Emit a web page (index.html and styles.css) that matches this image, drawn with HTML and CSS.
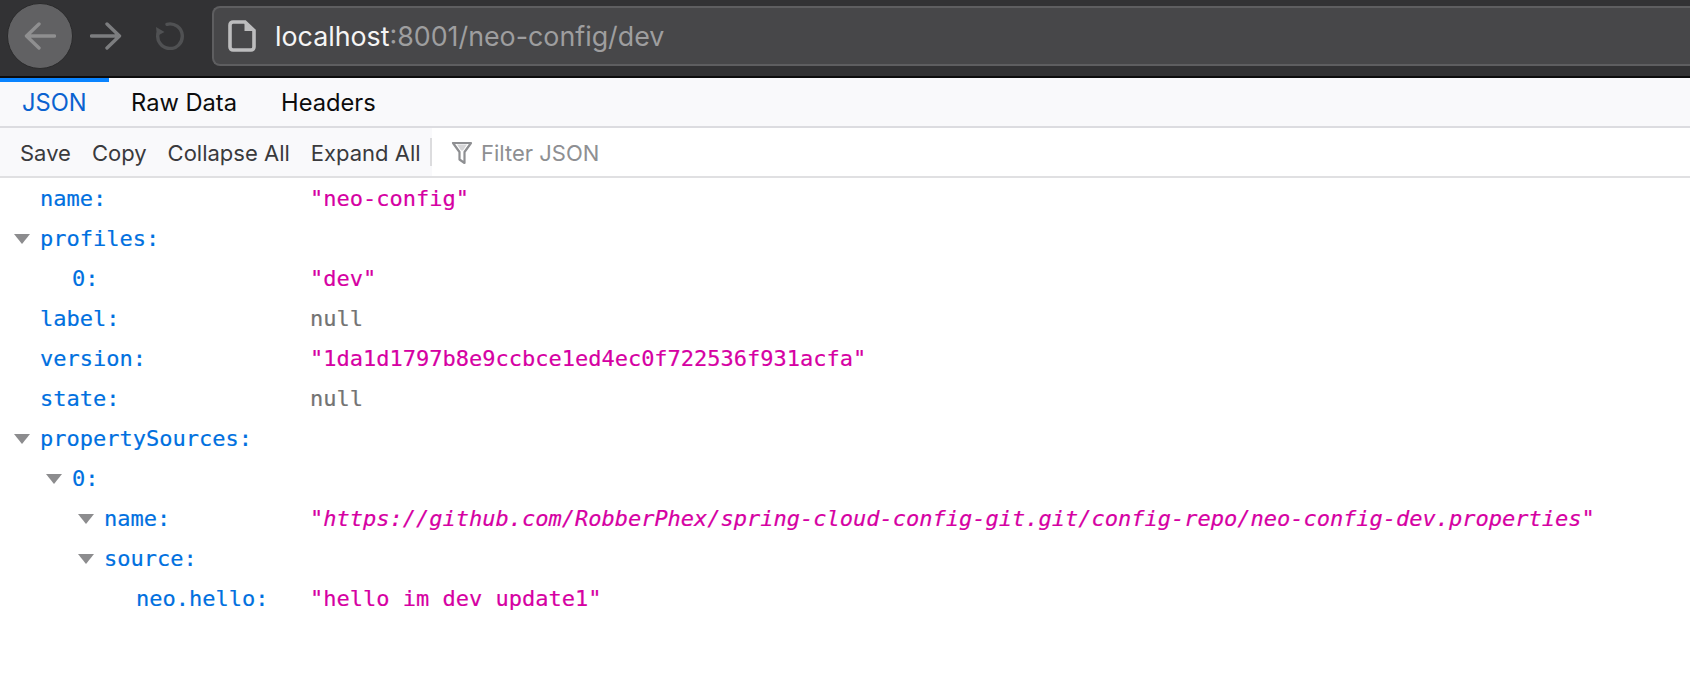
FILE: index.html
```html
<!DOCTYPE html>
<html lang="en">
<head>
<meta charset="utf-8">
<title>localhost:8001/neo-config/dev</title>
<link rel="stylesheet" href="styles.css">
</head>
<body>
<header class="chrome">
  <div class="nav-btn back">
    <svg viewBox="0 0 32 28" width="32" height="28"><path d="M30.500 14H3.500M15 2L2.500 14 15 26" fill="none" stroke="#8f8f90" stroke-width="3.400" stroke-linecap="round" stroke-linejoin="round"/></svg>
  </div>
  <div class="nav-btn forward">
    <svg viewBox="0 0 32 28" width="32" height="28"><path d="M1.500 14H28.500M17 2L29.500 14 17 26" fill="none" stroke="#7c7d7f" stroke-width="3.400" stroke-linecap="round" stroke-linejoin="round"/></svg>
  </div>
  <div class="nav-btn reload">
    <svg viewBox="0 0 30 28" width="30" height="28"><path d="M12 2.300A12.300 12.300 0 1 1 3 11.500" fill="none" stroke="#505153" stroke-width="3.400" stroke-linecap="round"/><path d="M1 5L9.500 10 2 14Z" fill="#505153"/></svg>
  </div>
  <div class="urlbar">
    <svg class="page-icon" viewBox="0 0 28 32" width="28" height="32"><path d="M5 2H17L26 10.500V27A3 3 0 0 1 23 30H5A3 3 0 0 1 2 27V5A3 3 0 0 1 5 2Z" fill="none" stroke="#bdbdbe" stroke-width="3.600"/><path d="M16.500 2.500V11H25.500Z" fill="#bdbdbe"/></svg>
    <span class="host">localhost</span><span class="rest">:8001/neo-config/dev</span>
  </div>
</header>
<nav class="tabs">
  <span class="tab active">JSON</span>
  <span class="tab">Raw Data</span>
  <span class="tab">Headers</span>
</nav>
<div class="toolbar">
  <div class="actions">
    <span class="action">Save</span>
    <span class="action">Copy</span>
    <span class="action">Collapse All</span>
    <span class="action">Expand All</span>
  </div>
  <div class="filter">
    <svg viewBox="0 0 22 24" width="22" height="24"><path d="M2 2H20L13.500 11V22L8.500 18.500V11Z" fill="none" stroke="#8e8f92" stroke-width="2.200" stroke-linejoin="round"/><path d="M6 3.500H16L12 9.500H10Z" fill="#d5d5d7"/></svg>
    <span>Filter JSON</span>
  </div>
</div>
<main class="tree">
  <div class="row"><div class="key l0"><span class="label">name:</span></div><div class="val str">"neo-config"</div></div>
  <div class="row"><div class="key l0"><i class="twisty"></i><span class="label">profiles:</span></div></div>
  <div class="row"><div class="key l1"><span class="label">0:</span></div><div class="val str">"dev"</div></div>
  <div class="row"><div class="key l0"><span class="label">label:</span></div><div class="val nul">null</div></div>
  <div class="row"><div class="key l0"><span class="label">version:</span></div><div class="val str">"1da1d1797b8e9ccbce1ed4ec0f722536f931acfa"</div></div>
  <div class="row"><div class="key l0"><span class="label">state:</span></div><div class="val nul">null</div></div>
  <div class="row"><div class="key l0"><i class="twisty"></i><span class="label">propertySources:</span></div></div>
  <div class="row"><div class="key l1"><i class="twisty"></i><span class="label">0:</span></div></div>
  <div class="row"><div class="key l2"><i class="twisty"></i><span class="label">name:</span></div><div class="val str">"<em>https://github.com/RobberPhex/spring-cloud-config-git.git/config-repo/neo-config-dev.properties</em>"</div></div>
  <div class="row"><div class="key l2"><i class="twisty"></i><span class="label">source:</span></div></div>
  <div class="row"><div class="key l3"><span class="label">neo.hello:</span></div><div class="val str">"hello im dev update1"</div></div>
</main>
</body>
</html>
```
FILE: styles.css
```css
* { box-sizing: border-box; }
html, body { margin: 0; padding: 0; height: 100%; overflow: hidden; background: #fff; }
body { font-family: Inter, "Liberation Sans", sans-serif; }

.chrome {
  height: 78px;
  background: #323234;
  border-bottom: 2px solid #0c0c0d;
  display: flex;
  align-items: center;
  padding: 0 0 4px 7px;
}
.nav-btn { display: flex; align-items: center; justify-content: center; flex: none; }
.back { width: 66px; height: 66px; border-radius: 50%; background: #616163; border: 1px solid #2a2a2b; }
.forward { width: 32px; height: 28px; margin-left: 17px; }
.reload { width: 30px; height: 28px; margin-left: 33px; }
.urlbar {
  flex: 1;
  height: 60px;
  margin-left: 27px;
  background: #474749;
  border: 2px solid #5e5e60;
  border-right: 0;
  border-radius: 8px 0 0 8px;
  display: flex;
  align-items: center;
  padding-left: 14px;
  font-size: 26.800px;
}
.page-icon { margin-right: 19px; flex: none; }
.host { color: #f5f5f5; }
.rest { color: #9e9e9f; }

.tabs {
  height: 50px;
  background: #f9f9fb;
  border-bottom: 2px solid #dcdce0;
  display: flex;
}
.tab {
  padding: 1px 22px 0;
  line-height: 48px;
  font-size: 23.700px;
  color: #0c0c0d;
}
.tab.active { color: #0a62d0; width: 109px; padding-left: 22px; box-shadow: inset 0 4px 0 #0a84ff; }

.toolbar {
  height: 50px;
  background: #fff;
  border-bottom: 2px solid #e0e0e2;
  display: flex;
  align-items: stretch;
}
.actions {
  background: #f9f9fb;
  display: flex;
  align-items: center;
  padding: 2px 0 0 20px;
  gap: 21px;
  width: 432px;
  position: relative;
  font-size: 22px;
  color: #3a3a3d;
}
.actions::after {
  content: "";
  position: absolute;
  right: 0;
  top: 10px;
  bottom: 10px;
  width: 2px;
  background: #dcdcde;
}
.filter {
  display: flex;
  align-items: center;
  padding: 2px 0 0 19px;
  gap: 8px;
  font-size: 22px;
  color: #8e8f92;
}

.tree {
  font-family: "DejaVu Sans Mono", "Liberation Mono", monospace;
  font-size: 22px;
  -webkit-text-stroke: 0.2px currentColor;
}
.row { display: flex; height: 40px; align-items: center; white-space: nowrap; }
.key { width: 310px; flex: none; display: flex; align-items: center; position: relative; }
.l0 { padding-left: 40px; }
.l1 { padding-left: 72px; }
.l2 { padding-left: 104px; }
.l3 { padding-left: 136px; }
.label { color: #0070e0; }
.twisty {
  position: absolute;
  margin: 2px 0 0 -26px;
  width: 0;
  height: 0;
  border-left: 8px solid transparent;
  border-right: 8px solid transparent;
  border-top: 10px solid #8c8c8e;
}
.str { color: #d600a3; }
.str em { font-style: italic; }
.nul { color: #737373; }
```
